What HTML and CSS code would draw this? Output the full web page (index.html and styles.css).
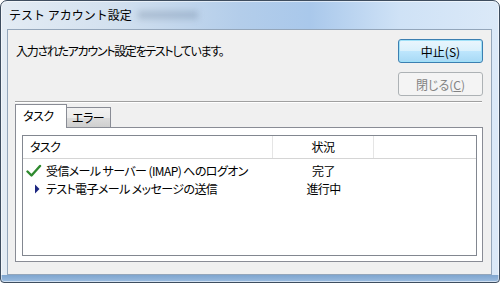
FILE: index.html
```html
<!DOCTYPE html>
<html lang="ja">
<head>
  <meta charset="UTF-8" />
  <title>テスト アカウント設定</title>
  <link rel="stylesheet" href="styles.css">
</head>
<body>

<div class="window">
  <div class="titlebar">
    <span class="title">テスト アカウント設定</span>
    <span class="ghost"></span>
  </div>

  <div class="client">
    <div class="top">
      <p class="message">入力されたアカウント設定をテストしています。</p>
      <div class="buttons">
        <button class="btn btn-default">中止(S)</button>
        <button class="btn" disabled>閉じる(<u>C</u>)</button>
      </div>
    </div>

    <div class="separator"></div>

    <!-- タブ -->
    <div class="tabs">
      <div class="tab active">タスク</div>
      <div class="tab">エラー</div>
    </div>

    <div class="panel">
      <div class="list">
        <div class="list-head">
          <div class="col first">タスク</div>
          <div class="col center">状況</div>
          <div class="col"></div>
        </div>

        <div class="rows">
          <div class="row">
            <div class="cell first">
              <span class="icon">
                <svg width="16" height="14" viewBox="0 0 16 14">
                  <path d="M1.5 7.5 L5.5 11.5 L14 2" fill="none" stroke="#2f8a2f" stroke-width="2.4" stroke-linecap="round" stroke-linejoin="round"/>
                </svg>
              </span>
              <span class="label">受信メール サーバー (IMAP) へのログオン</span>
            </div>
            <div class="cell center">完了</div>
            <div class="cell"></div>
          </div>
          <div class="row">
            <div class="cell first">
              <span class="icon">
                <svg width="16" height="14" viewBox="0 0 16 14">
                  <polygon points="9,2.5 13.5,7 9,11.5" fill="#1c2680"/>
                </svg>
              </span>
              <span class="label">テスト電子メール メッセージの送信</span>
            </div>
            <div class="cell center">進行中</div>
            <div class="cell"></div>
          </div>
        </div>
      </div>
    </div>
  </div>
</div>

</body>
</html>
```

FILE: styles.css
```css
html, body {
  margin: 0;
  padding: 0;
  background: #fff;
  font-family: "Noto Sans CJK JP", "Liberation Sans", sans-serif;
  font-size: 12px;
  font-feature-settings: "palt";
  color: #000;
}

/* ウィンドウ枠 */
.window {
  width: 500px;
  height: 283px;
  box-sizing: border-box;
  border: 1px solid #3e4d5f;
  border-radius: 7px 7px 4px 4px;
  padding: 0 7px 7px 6px;
  display: flex;
  flex-direction: column;
  background:
    linear-gradient(180deg, transparent 0, transparent 274px, #7fa5cf 274px, #9cbde0 100%),
    linear-gradient(90deg, #e4ecf4 0%, #d3e1ef 22%, #b3cdea 48%, #a9c8eb 62%, #cfe2f6 80%, #dbe9f8 100%);
  box-shadow: inset 0 0 0 1px rgba(255, 255, 255, 0.55);
  overflow: hidden;
}

.titlebar {
  height: 28px;
  display: flex;
  align-items: center;
  padding-left: 2px;
}

.title {
  font-size: 12px;
  line-height: 14px;
  color: #000;
  font-feature-settings: normal;
  margin-top: -1px;
}

.ghost {
  display: inline-block;
  width: 60px;
  height: 8px;
  margin-left: 6px;
  background: rgba(60, 80, 110, 0.22);
  filter: blur(3px);
}

/* クライアント領域 */
.client {
  flex: 1;
  background: #f0f0f0;
  border: 1px solid #94a6ba;
  display: flex;
  flex-direction: column;
}

.top {
  display: flex;
  justify-content: space-between;
  padding: 9px 8px 0 8px;
}

.message {
  margin: 0;
  line-height: 24px;
  letter-spacing: -1.3px;
}

.buttons {
  display: flex;
  flex-direction: column;
  gap: 9px;
}

.btn {
  width: 85px;
  height: 24px;
  padding: 0;
  font-family: inherit;
  font-size: 12px;
  font-feature-settings: "palt";
  color: #000;
  border: 1px solid #707070;
  border-radius: 3px;
  background: linear-gradient(#f2f2f2 0%, #ebebeb 50%, #dddddd 50%, #cfcfcf 100%);
}

.btn-default {
  border-color: #3c7fb1;
  background: linear-gradient(#eaf6fd 0%, #d9f0fc 50%, #bee6fd 50%, #a7d9f5 100%);
  box-shadow: inset 0 0 0 1px #9fe1f8;
}

.btn:disabled {
  border-color: #adb2b5;
  background: #f4f4f4;
  color: #838383;
}

.separator {
  margin: 5px 9px 0 7px;
  border-top: 1px solid #a0a0a0;
  border-bottom: 1px solid #fff;
}

/* タブ */
.tabs {
  display: flex;
  align-items: flex-end;
  height: 24px;
  margin-left: 7px;
}

.tab {
  box-sizing: border-box;
  height: 20px;
  width: 44px;
  padding-left: 5px;
  line-height: 19px;
  letter-spacing: -0.5px;
  border: 1px solid #898c95;
  border-left: none;
  border-bottom: none;
  background: linear-gradient(#f2f2f2 0%, #ebebeb 50%, #dddddd 50%, #cfcfcf 100%);
}

.tab.active {
  position: relative;
  z-index: 1;
  height: 24px;
  width: 52px;
  margin-bottom: -1px;
  padding-left: 7px;
  line-height: 22px;
  border-left: 1px solid #898c95;
  background: #fff;
}

.panel {
  flex: 1;
  margin: 0 8px 12px 7px;
  padding: 7px 5px 5px 6px;
  background: #fff;
  border: 1px solid #898c95;
  display: flex;
}

/* リスト */
.list {
  flex: 1;
  border: 1px solid #828790;
  background: #fff;
  letter-spacing: -0.6px;
}

.list-head,
.row {
  display: grid;
  grid-template-columns: 250px 101px 1fr;
}

.list-head {
  height: 22px;
  border-bottom: 1px solid #d5d5d5;
}

.list-head .col {
  line-height: 22px;
  border-right: 1px solid #e5e5e5;
}

.list-head .col:last-child {
  border-right: none;
}

.list-head .first {
  padding-left: 7px;
}

.center {
  text-align: center;
}

.rows {
  padding-top: 3px;
}

.row {
  height: 18px;
  line-height: 18px;
}

.cell.first {
  display: flex;
  align-items: center;
  white-space: nowrap;
}

.icon {
  width: 23px;
  flex-shrink: 0;
  display: flex;
  padding-left: 3px;
  box-sizing: border-box;
}
```
